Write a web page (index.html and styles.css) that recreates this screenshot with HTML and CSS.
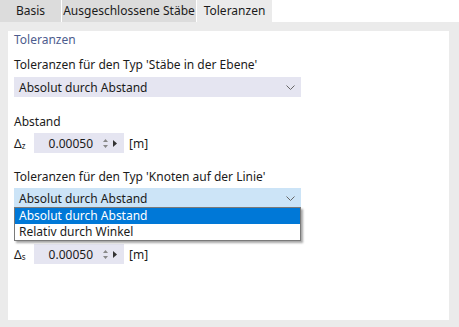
FILE: index.html
```html
<!DOCTYPE html>
<html lang="de">
<head>
    <meta charset="UTF-8">
    <title>Toleranzen</title>
    <link rel="stylesheet" href="styles.css">
</head>
<body>
    <div class="tabs">
        <div class="tab tab-basis">Basis</div>
        <div class="tab tab-staebe">Ausgeschlossene Stäbe</div>
        <div class="tab tab-aktiv">Toleranzen</div>
    </div>

    <div class="fenster">
        <div class="panel">
            <div class="titel">Toleranzen</div>

            <div class="beschriftung erste">Toleranzen für den Typ 'Stäbe in der Ebene'</div>
            <div class="auswahl">
                <span>Absolut durch Abstand</span>
                <svg class="pfeil" width="9" height="5" viewBox="0 0 9 5"><path d="M0.5 0.5 L4.5 4.5 L8.5 0.5" fill="none" stroke="#666" stroke-width="1"/></svg>
            </div>

            <div class="beschriftung abstand">Abstand</div>
            <div class="zeile">
                <span class="symbol">Δ<sub>z</sub></span>
                <div class="eingabe">
                    <span class="wert">0.00050</span>
                    <svg class="spin" width="5" height="9" viewBox="0 0 5 9"><path d="M2.5 0 L5 3 L0 3 Z M2.5 9 L5 6 L0 6 Z" fill="#888"/></svg>
                    <svg class="weiter" width="4" height="7" viewBox="0 0 4 7"><path d="M0 0 L4 3.5 L0 7 Z" fill="#333"/></svg>
                </div>
                <span class="einheit">[m]</span>
            </div>

            <div class="beschriftung zweite">Toleranzen für den Typ 'Knoten auf der Linie'</div>
            <div class="auswahl offen">
                <span>Absolut durch Abstand</span>
                <svg class="pfeil" width="9" height="5" viewBox="0 0 9 5"><path d="M0.5 0.5 L4.5 4.5 L8.5 0.5" fill="none" stroke="#666" stroke-width="1"/></svg>
                <div class="liste">
                    <div class="eintrag gewaehlt">Absolut durch Abstand</div>
                    <div class="eintrag">Relativ durch Winkel</div>
                </div>
            </div>

            <!-- liegt unter der offenen Liste -->
            <div class="beschriftung abstand verdeckt">Abstand</div>
            <div class="zeile">
                <span class="symbol">Δ<sub>s</sub></span>
                <div class="eingabe">
                    <span class="wert">0.00050</span>
                    <svg class="spin" width="5" height="9" viewBox="0 0 5 9"><path d="M2.5 0 L5 3 L0 3 Z M2.5 9 L5 6 L0 6 Z" fill="#888"/></svg>
                    <svg class="weiter" width="4" height="7" viewBox="0 0 4 7"><path d="M0 0 L4 3.5 L0 7 Z" fill="#333"/></svg>
                </div>
                <span class="einheit">[m]</span>
            </div>
        </div>
    </div>
</body>
</html>
```

FILE: styles.css
```css
* {
    box-sizing: border-box;
}

body {
    margin: 0;
    width: 459px;
    height: 327px;
    overflow: hidden;
    background-color: white;
    font-family: 'Noto Sans', sans-serif;
    font-size: 12px;
    color: #1b1b1b;
}

.tabs {
    display: flex;
    height: 22px;
    gap: 1px;
}

.tab {
    height: 22px;
    line-height: 22px;
    text-align: center;
    background-color: #dcdcdc;
}

.tab-basis {
    width: 61px;
}

.tab-staebe {
    width: 134px;
}

.tab-aktiv {
    width: 75px;
    background-color: #ebebeb;
}

.fenster {
    height: 305px;
    background-color: #ebebeb;
    padding: 9px 10px 7px 8px;
}

.panel {
    height: 289px;
    background-color: white;
    padding: 1px 0 0 6px;
}

.titel {
    line-height: 16px;
    color: #4d5c8e;
}

.beschriftung {
    line-height: 16px;
}

.erste {
    margin-top: 9px;
}

.zweite {
    margin-top: 16px;
}

.abstand {
    margin-top: 17px;
}

.verdeckt {
    visibility: hidden;
}

.auswahl {
    position: relative;
    width: 287px;
    height: 20px;
    margin-top: 4px;
    padding: 0 6px 0 5px;
    display: flex;
    align-items: center;
    justify-content: space-between;
    background-color: #e5e5f1;
}

.offen {
    margin-top: 3px;
    background-color: #cce4f7;
}

.liste {
    position: absolute;
    left: 0;
    top: 19px;
    width: 287px;
    background-color: white;
    border: 1px solid #7a7a7a;
    box-shadow: 2px 2px 2px rgba(0, 0, 0, 0.35);
}

.eintrag {
    height: 16px;
    line-height: 16px;
    padding-left: 4px;
}

.gewaehlt {
    background-color: #0078d7;
    color: white;
}

.zeile {
    margin-top: 3px;
    display: flex;
    align-items: center;
    height: 20px;
}

.symbol {
    width: 20px;
    font-size: 12px;
}

.symbol sub {
    font-size: 8px;
    vertical-align: -1px;
}

.eingabe {
    width: 90px;
    height: 20px;
    display: flex;
    align-items: center;
    background-color: #e5e5f1;
}

.wert {
    width: 59px;
    text-align: right;
}

.spin {
    margin-left: 10px;
}

.weiter {
    margin-left: 5px;
}

.einheit {
    margin-left: 5px;
}
```
